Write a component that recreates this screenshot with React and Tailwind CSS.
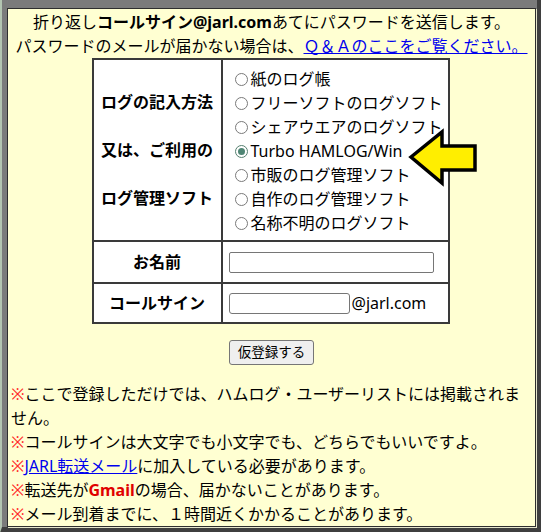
import React from "react";

const opts = [
  "紙のログ帳",
  "フリーソフトのログソフト",
  "シェアウエアのログソフト",
  "Turbo HAMLOG/Win",
  "市販のログ管理ソフト",
  "自作のログ管理ソフト",
  "名称不明のログソフト",
];

function Radio({ checked }) {
  return (
    <span
      className={
        "inline-flex items-center justify-center w-[13px] h-[13px] rounded-full border bg-white ml-[1px] mr-[3px] shrink-0 " +
        (checked ? "border-[#56806f]" : "border-[#7a7a7a]")
      }
    >
      {checked && <span className="block w-[7px] h-[7px] rounded-full bg-[#4f8574]" />}
    </span>
  );
}

function Mark() {
  return <span className="text-[#ff2a2a]">※</span>;
}

export default function App() {
  return (
    <div className="relative w-[541px] min-h-[532px] bg-[#7b7b7b] border-l-[2px] border-l-[#b3c5b1] border-r-[4px] border-r-[#3f3f3f] border-b-[6px] border-b-[#3f3f3f] pt-[8px] pl-[5px] pr-[1px] font-['Noto_Sans','Noto_Sans_CJK_JP',sans-serif] text-[16px] text-black">
      <div className="bg-[#ffffd2] border border-[#2e2e2e] shadow-[1px_1px_0_#e6e6cc]">
        <div className="pt-[1px] text-center leading-[24px]">
          <div>
            折り返し<b className="font-bold">コールサイン@jarl.com</b>あてにパスワードを送信します。
          </div>
          <div>
            パスワードのメールが届かない場合は、
            <a href="#" className="text-[#0000ee] underline">
              Ｑ＆Ａのここをご覧ください。
            </a>
          </div>
        </div>

        <div className="flex justify-center">
          <div className="w-[358px] bg-[#3a3a3a] p-[2px] grid grid-cols-[127px_1fr] gap-[2px] mr-[2px]">
            <div className="bg-white flex flex-col items-center justify-center gap-[24px] font-bold leading-[24px] h-[180px]">
              <div>ログの記入方法</div>
              <div>又は、ご利用の</div>
              <div>ログ管理ソフト</div>
            </div>
            <div className="bg-white pt-[7px] pl-[11px] leading-[24px]">
              {opts.map((o, i) => (
                <div key={o} className="flex items-center h-[24px] whitespace-nowrap">
                  <Radio checked={i === 3} />
                  <span>{o}</span>
                </div>
              ))}
            </div>

            <div className="bg-white h-[40px] flex items-center justify-center font-bold">お名前</div>
            <div className="bg-white h-[40px] flex items-center pl-[6px]">
              <div className="w-[205px] h-[21px] border border-[#767676] rounded-[2px] bg-white" />
            </div>

            <div className="bg-white h-[38px] flex items-center justify-center font-bold">コールサイン</div>
            <div className="bg-white h-[38px] flex items-center pl-[6px]">
              <div className="w-[121px] h-[21px] border border-[#767676] rounded-[3px] bg-white" />
              <span className="ml-[2px]">@jarl.com</span>
            </div>
          </div>
        </div>

        <div className="flex justify-center mt-[16px]">
          <button className="h-[25px] px-[8px] border border-[#767676] rounded-[3px] bg-[#efefef] text-[13.5px] leading-none font-['Noto_Sans','Noto_Sans_CJK_JP',sans-serif]">
            仮登録する
          </button>
        </div>

        <div className="mt-[17px] px-[3px] leading-[24px]">
          <p>
            <Mark />ここで登録しただけでは、ハムログ・ユーザーリストには掲載されません。
          </p>
          <p>
            <Mark />コールサインは大文字でも小文字でも、どちらでもいいですよ。
          </p>
          <p>
            <Mark />
            <a href="#" className="text-[#0000ee] underline">JARL転送メール</a>
            に加入している必要があります。
          </p>
          <p>
            <Mark />転送先が<b className="font-bold text-[#e00000]">Gmail</b>の場合、届かないことがあります。
          </p>
          <p>
            <Mark />メール到着までに、１時間近くかかることがあります。
          </p>
        </div>
      </div>

      <svg
        className="absolute left-[-2px] top-0 pointer-events-none"
        width="541"
        height="532"
        viewBox="0 0 541 532"
      >
        <path
          d="M411 157 L442 132 L442 146 L475 146 L475 170 L442 170 L442 183 Z"
          fill="#ffee00"
          stroke="#000"
          strokeWidth="3.5"
          strokeLinejoin="miter"
        />
      </svg>
    </div>
  );
}
